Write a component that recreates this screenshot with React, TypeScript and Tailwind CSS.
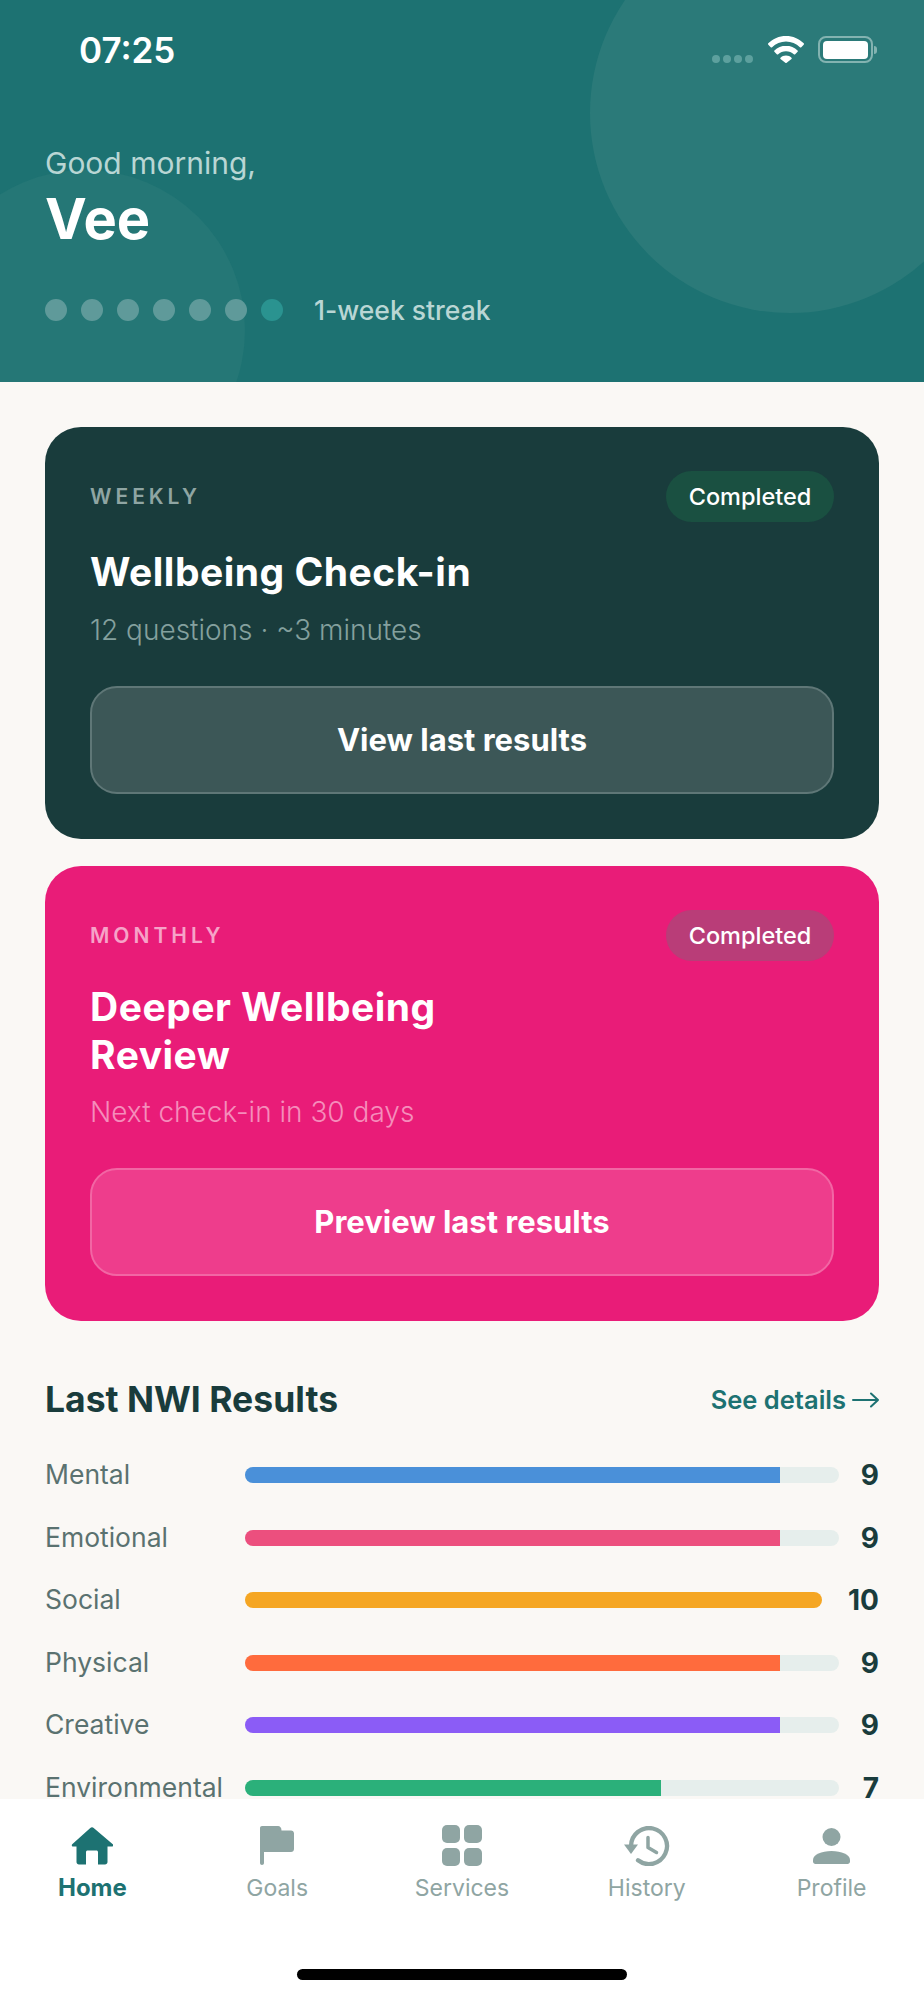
import React from "react";

const font = { fontFamily: 'Inter, "Noto Sans", sans-serif' };

function Card({ label, title, sub, action, bg, labelCls, pillCls, subCls, btnCls, titleMt, subMt }: {
  label: string; title: React.ReactNode; sub: string; action: string; bg: string; labelCls: string; pillCls: string; subCls: string; btnCls: string; titleMt: string; subMt: string;
}) {
  return (
    <section className={`rounded-[36px] px-[45px] pt-[44px] pb-[45px] ${bg}`}>
      <div className="flex h-[51px] items-center justify-between">
        <span className={`text-[21px] leading-none font-semibold tracking-[4px] ${labelCls}`}>{label}</span>
        <span className={`flex h-[51px] w-[168px] items-center justify-center rounded-full text-[23.500px] font-medium text-white ${pillCls}`}>Completed</span>
      </div>
      <h2 className={`text-[39px] leading-[48px] font-bold tracking-[0.500px] text-white ${titleMt}`}>{title}</h2>
      <p className={`text-[28px] leading-[36px] font-light ${subMt} ${subCls}`}>{sub}</p>
      <button className={`mt-[38px] flex h-[108px] w-full items-center justify-center rounded-[27px] border-2 text-[31px] font-bold text-white ${btnCls}`}>{action}</button>
    </section>
  );
}

const rows = [
  { name: "Mental", value: 9, color: "bg-[#4a90d9]" },
  { name: "Emotional", value: 9, color: "bg-[#ec4f7e]" },
  { name: "Social", value: 10, color: "bg-[#f5a623]" },
  { name: "Physical", value: 9, color: "bg-[#ff6b3d]" },
  { name: "Creative", value: 9, color: "bg-[#8b5cf6]" },
  { name: "Environmental", value: 7, color: "bg-[#2bb07a]" },
];

const Home = () => (
  <svg width="42" height="38" viewBox="0 0 42 38" fill="#1d7272">
    <path d="M19.3 1 1.2 17.200c-.9.9-.3 2.300.9 2.300H5.500v15.500c0 1.400 1.100 2.500 2.500 2.500H15V25c0-.9.7-1.600 1.600-1.600h8.800c.9 0 1.600.7 1.600 1.600v12.500h7c1.400 0 2.500-1.100 2.500-2.500V19.500h4.400c1.200 0 1.800-1.400.9-2.300L22.700 1c-.9-.9-2.500-.9-3.400 0Z" />
  </svg>
);
const Flag = () => (
  <svg width="34" height="39" viewBox="0 0 34 39" fill="#8fa5a3">
    <path d="M2 0h16c2 0 3.500 1.500 3.500 4.500H31c1.700 0 3 1.300 3 3V23c0 1.700-1.300 3-3 3H4v11c0 1.100-.9 2-2 2s-2-.9-2-2V2C0 .9.900 0 2 0Z" />
  </svg>
);
const Grid = () => (
  <div className="grid grid-cols-2 gap-[4.500px]">
    <div className="h-[18px] w-[18px] rounded-[5px] bg-[#8fa5a3]" />
    <div className="h-[18px] w-[18px] rounded-[5px] bg-[#8fa5a3]" />
    <div className="h-[18px] w-[18px] rounded-[5px] bg-[#8fa5a3]" />
    <div className="h-[18px] w-[18px] rounded-[5px] bg-[#8fa5a3]" />
  </div>
);
const HistoryIcon = () => (
  <svg width="46" height="40" viewBox="0 0 46 40" fill="none">
    <path d="M7 20A18 18 0 1 1 14 34.300" stroke="#8fa5a3" strokeWidth="4.300" strokeLinecap="round" />
    <path d="M0 18.500h14l-7 9.500Z" fill="#8fa5a3" />
    <path d="M24 11.500V21.500l8.500 5" stroke="#8fa5a3" strokeWidth="3.500" strokeLinecap="round" strokeLinejoin="round" />
  </svg>
);
const Person = () => (
  <svg width="37" height="36" viewBox="0 0 37 36" fill="#8fa5a3">
    <circle cx="18.500" cy="9" r="9" />
    <path d="M0 32c0-5.500 8.500-9 18.500-9S37 26.500 37 32v1.500c0 1.400-1.100 2.500-2.500 2.500h-32C1.100 36 0 34.900 0 33.500Z" />
  </svg>
);

const tabs = [
  { name: "Home", icon: <Home />, cls: "text-[24px] font-bold text-[#1d7272]" },
  { name: "Goals", icon: <Flag />, cls: "text-[23px] text-[#8fa5a3]" },
  { name: "Services", icon: <Grid />, cls: "text-[23px] text-[#8fa5a3]" },
  { name: "History", icon: <HistoryIcon />, cls: "text-[23px] text-[#8fa5a3]" },
  { name: "Profile", icon: <Person />, cls: "text-[23px] text-[#8fa5a3]" },
];

export default function App() {
  return (
    <div style={font} className="flex h-[2000px] w-[924px] flex-col overflow-hidden bg-[#faf8f5]">
      <header className="relative h-[382px] shrink-0 overflow-hidden bg-[#1d7272]">
        <div className="absolute top-[-87px] left-[590px] h-[400px] w-[400px] rounded-full bg-[#2b7a79]" />
        <div className="absolute top-[170px] left-[-75px] h-[320px] w-[320px] rounded-full bg-[#257776]" />
        <div className="relative">
          <div className="flex h-[100px] items-start justify-between pr-[47px] pl-[79px]">
            <span className="mt-[30px] text-[35px] leading-[40px] font-semibold text-white">07:25</span>
            <div className="mt-[36px] flex items-start">
              <div className="mt-[19px] flex gap-[3px]">
                <i className="h-[8px] w-[8px] rounded-full bg-[#5da09e]" />
                <i className="h-[8px] w-[8px] rounded-full bg-[#5da09e]" />
                <i className="h-[8px] w-[8px] rounded-full bg-[#5da09e]" />
                <i className="h-[8px] w-[8px] rounded-full bg-[#5da09e]" />
              </div>
              <svg className="ml-[15px]" width="36" height="27" viewBox="0 0 36 27" fill="white">
                <path d="M18 0C11 0 5 2.600.3 7.300c-.4.400-.4 1 0 1.400l2.400 2.500c.4.400 1 .4 1.400 0C7.800 7.500 12.700 5.400 18 5.400s10.200 2.100 13.900 5.800c.4.400 1 .4 1.400 0l2.400-2.500c.4-.4.4-1 0-1.400C31 2.600 25 0 18 0Z" />
                <path d="M18 9.700c-4.500 0-8.500 1.700-11.600 4.700-.4.400-.4 1 0 1.400l2.400 2.400c.4.400 1 .4 1.400 0 2-1.900 4.800-3 7.800-3s5.800 1.100 7.800 3c.4.400 1 .4 1.400 0l2.400-2.400c.4-.4.4-1 0-1.400-3.100-3-7.100-4.700-11.600-4.700Z" />
                <path d="M18 19.500c-2.200 0-4.100.8-5.500 2.200-.4.400-.4 1 0 1.400l4.800 3.600c.4.300 1 .3 1.400 0l4.800-3.600c.4-.4.4-1 0-1.400-1.400-1.400-3.300-2.200-5.500-2.200Z" />
              </svg>
              <div className="ml-[14px] flex items-center">
                <div className="flex h-[27px] w-[55px] items-center justify-center rounded-[8px] border-[2.500px] border-[#83b3b1]">
                  <div className="h-[18px] w-[45px] rounded-[4px] bg-white" />
                </div>
                <div className="ml-[1px] h-[8px] w-[3px] rounded-r-full bg-[#83b3b1]" />
              </div>
            </div>
          </div>
          <div className="pl-[45px]">
            <p className="mt-[43px] text-[30px] leading-[40px] text-[#b9d6d4]">Good morning,</p>
            <h1 className="mt-[2px] text-[56px] leading-[68px] font-bold text-white">Vee</h1>
            <div className="mt-[46px] flex h-[22px] items-center">
              {[0, 1, 2, 3, 4, 5, 6].map((i) => (
                <span key={i} className={`mr-[14px] h-[22px] w-[22px] rounded-full ${i === 6 ? "bg-[#2a9390]" : "bg-[#5f9a9a]"}`} />
              ))}
              <span className="ml-[17px] text-[26.500px] leading-[30px] font-medium text-[#b9d6d4]">1-week streak</span>
            </div>
          </div>
        </div>
      </header>

      <main className="min-h-0 flex-1 overflow-hidden px-[45px] pt-[45px]">
        <Card
          label="WEEKLY"
          title="Wellbeing Check-in"
          sub="12 questions · ~3 minutes"
          action="View last results"
          bg="bg-[#193c3c]"
          labelCls="text-[#8fa5a3]"
          pillCls="bg-[#1a5041]"
          subCls="text-[#84a09e]"
          btnCls="bg-[#3c5757] border-[#5f7777]"
          titleMt="mt-[26px]"
          subMt="mt-[16px]"
        />
        <div className="h-[27px]" />
        <Card
          label="MONTHLY"
          title={<>Deeper Wellbeing<br />Review</>}
          sub="Next check-in in 30 days"
          action="Preview last results"
          bg="bg-[#e91c78]"
          labelCls="text-[#f6a3c8]"
          pillCls="bg-[#b93d78]"
          subCls="text-[#f58dbb]"
          btnCls="bg-[#ee3d8c] border-[#f266a4]"
          titleMt="mt-[22px]"
          subMt="mt-[15px]"
        />
        <div className="mt-[57px] flex items-center justify-between">
          <h3 className="text-[35.500px] leading-[44px] font-bold text-[#193c3c]">Last NWI Results</h3>
          <div className="flex items-center gap-[6px]">
            <span className="text-[25.500px] leading-[44px] font-semibold text-[#1d7272]">See details</span>
            <svg width="27" height="16" viewBox="0 0 27 16" fill="none" stroke="#1d7272" strokeWidth="2" strokeLinecap="round" strokeLinejoin="round">
              <path d="M1 8h25M19 1.500 26 8l-7 6.500" />
            </svg>
          </div>
        </div>
        <div className="mt-[22px]">
          {rows.map((r) => (
            <div key={r.name} className="flex h-[62.500px] items-center">
              <span className="w-[200px] shrink-0 text-[26.500px] text-[#5a7270]">{r.name}</span>
              <div className="h-[16px] flex-1 overflow-hidden rounded-full bg-[#e6eeec]">
                <div style={{ width: `${r.value * 10}%` }} className={`h-full ${r.color}`} />
              </div>
              <span className={`ml-[23px] flex justify-end text-[28px] font-bold text-[#193c3c] ${r.value === 10 ? "w-[34px]" : "w-[17px]"}`}>{r.value}</span>
            </div>
          ))}
        </div>
      </main>

      <nav className="h-[201px] shrink-0 bg-white">
        <div className="grid h-[170px] grid-cols-5 pt-[26px]">
          {tabs.map((t) => (
            <div key={t.name} className="flex flex-col items-center">
              <div className="flex h-[41px] items-center justify-center">{t.icon}</div>
              <span className={`mt-[5px] leading-[34px] ${t.cls}`}>{t.name}</span>
            </div>
          ))}
        </div>
        <div className="mx-auto h-[11px] w-[330px] rounded-full bg-black" />
      </nav>
    </div>
  );
}
